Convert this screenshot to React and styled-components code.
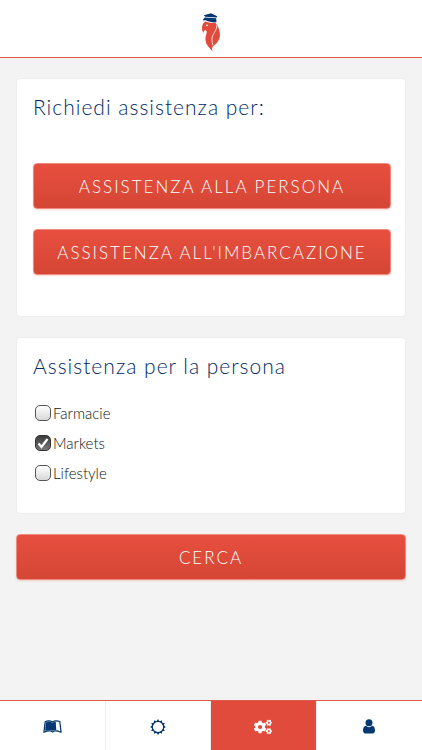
import React, { useState } from 'react';
import styled, { createGlobalStyle } from 'styled-components';
import { FaLeanpub, FaCogs } from 'react-icons/fa';

const RED = '#e14b3b';
const NAVY = '#053872';

const GlobalStyle = createGlobalStyle`
  *, *::before, *::after { box-sizing: border-box; }
  body {
    margin: 0;
    background: #f3f3f3;
    color: #111;
    font-family: Lato, "Open Sans", sans-serif;
    font-weight: 300;
  }
`;

const Page = styled.div`
  min-height: 100vh;
  display: flex;
  flex-direction: column;
`;

const Header = styled.header`
  height: 58px;
  display: flex;
  justify-content: center;
  padding-top: 13px;
  background: #fff;
  border-bottom: 1px solid #e0584b;
`;

const Main = styled.main`
  flex: 1;
  display: flex;
  flex-direction: column;
  gap: 20px;
  padding: 20px 16px;
`;

const Card = styled.section`
  padding: 15px 14px 25px 16px;
  background: #fff;
  border: 1px solid #eee;
  border-radius: 4px;
`;

const ActionCard = styled(Card)`
  padding-bottom: 41px;
`;

const Title = styled.h2`
  margin: 0;
  color: #002a66;
  font-size: 21px;
  font-weight: 300;
  line-height: 26px;
  letter-spacing: 1px;
`;

const Actions = styled.div`
  display: flex;
  flex-direction: column;
  gap: 20px;
  margin-top: 43px;
`;

const Button = styled.button`
  width: 100%;
  height: 46px;
  padding: 0 8px;
  border: 1px solid #ee8a7f;
  border-radius: 4px;
  background: linear-gradient(#e74f3f, #d54634);
  box-shadow: 0 1px 2px rgba(213, 70, 52, 0.2);
  color: #fff;
  font-family: inherit;
  font-size: 17px;
  font-weight: 300;
  letter-spacing: 2px;
  text-transform: uppercase;
  white-space: nowrap;
  cursor: pointer;
`;

const Options = styled.div`
  display: flex;
  flex-direction: column;
  margin-top: 19px;
`;

const Option = styled.label`
  display: flex;
  align-items: center;
  gap: 2px;
  height: 30px;
  padding-left: 2px;
  font-size: 15px;
`;

const Box = styled.span`
  display: grid;
  width: 16px;
  height: 16px;

  & > * { grid-area: 1 / 1; }

  svg {
    pointer-events: none;
    visibility: hidden;
  }

  input:checked + svg { visibility: visible; }
`;

const Tick = styled.input`
  appearance: none;
  width: 16px;
  height: 16px;
  margin: 0;
  border: 1px solid #555;
  border-radius: 5px;
  background: linear-gradient(#fff, #d8d8d8);

  &:checked {
    border-color: #333;
    background: linear-gradient(#3c3c3c, #777);
  }
`;

const Tabs = styled.nav`
  display: grid;
  grid-template-columns: repeat(4, 1fr);
  height: 50px;
  background: #fff;
  border-top: 1px solid #de5a4c;
`;

const Tab = styled.a`
  display: flex;
  align-items: center;
  justify-content: center;
  padding-top: 2px;
  border-right: 1px solid #eee;
  background: ${(p) => (p.$active ? RED : '#fff')};
  color: ${(p) => (p.$active ? '#fff' : NAVY)};

  &:last-child { border-right: 0; }
`;

function ParrotLogo() {
  return (
    <svg width="20" height="40" viewBox="0 0 20 40" role="img" aria-label="Logo">
      <path
        fill={RED}
        d="M4.200 8.500C2 10 .9 12.500 1 15.500c.1 2 .6 3.400 1.700 4.500 0-1.700.6-2.700 1.700-3 1.400 1 1.600 2.500.9 4.300-1.500 3.700-1.100 8 1.200 11.300 1.400 2 3 3.400 5 6-.7-2.200-.5-3.900.4-5.400 3.200-1.800 6.400-5.600 7-10 .5-4.800-1.200-9.700-4.700-13.700-3 .9-6.400.4-10-1z"
      />
      <path
        fill="none"
        stroke="#fff"
        strokeWidth=".8"
        d="M15.500 12.500c1 5-4.500 8-4.500 13.500 0 2.500.3 4.500.9 6.200"
      />
      <circle cx="6" cy="12.300" r=".9" fill="#fff" />
      <path fill={NAVY} d="M2.800 2.300 10 .2l6.200 3-.5 1.200-11.500-.6z" />
      <path fill={NAVY} d="M4 4.500 15.200 5.200l.3 4c-3.500.4-7.300-.2-10.800-2L2 7.500c.2-1.300.9-2.200 2-3z" />
    </svg>
  );
}

function SunIcon() {
  const rays = Array.from({ length: 12 }, (_, i) => i * 30);
  return (
    <svg width="16" height="16" viewBox="0 0 16 16" aria-hidden="true">
      <circle cx="8" cy="8" r="5.700" fill="none" stroke="currentColor" strokeWidth="1.300" />
      {rays.map((angle) => (
        <path key={angle} d="M6.500 2.600 8 .1l1.500 2.500z" fill="currentColor" transform={`rotate(${angle} 8 8)`} />
      ))}
    </svg>
  );
}

function UserIcon() {
  return (
    <svg width="12" height="15" viewBox="0 0 12 15" aria-hidden="true">
      <circle cx="6" cy="3.700" r="3.500" fill="currentColor" />
      <path
        fill="currentColor"
        d="M2.900 6.700a4.500 4.500 0 0 0 6.200 0C11.100 6.800 12 9 12 11.600c0 1.700-.9 2.900-2.300 2.900H2.300C.9 14.500 0 13.300 0 11.600c0-2.600.9-4.800 2.900-4.900z"
      />
    </svg>
  );
}

const TABS = [
  { label: 'Guida', href: '#guida', icon: <FaLeanpub size={19} /> },
  { label: 'Meteo', href: '#meteo', icon: <SunIcon /> },
  { label: 'Assistenza', href: '#assistenza', icon: <FaCogs size={18} />, active: true },
  { label: 'Profilo', href: '#profilo', icon: <UserIcon /> },
];

export default function App() {
  const [selected, setSelected] = useState({ Farmacie: false, Markets: true, Lifestyle: false });
  const toggle = (name) => setSelected((s) => ({ ...s, [name]: !s[name] }));

  return (
    <Page>
      <GlobalStyle />
      <Header>
        <ParrotLogo />
      </Header>
      <Main>
        <ActionCard>
          <Title>Richiedi assistenza per:</Title>
          <Actions>
            <Button type="button">Assistenza alla persona</Button>
            <Button type="button">Assistenza all'imbarcazione</Button>
          </Actions>
        </ActionCard>
        <Card>
          <Title>Assistenza per la persona</Title>
          <Options>
            {Object.keys(selected).map((name) => (
              <Option key={name}>
                <Box>
                  <Tick type="checkbox" checked={selected[name]} onChange={() => toggle(name)} />
                  <svg width="16" height="16" viewBox="0 0 16 16" aria-hidden="true">
                    <path d="M3.500 8.500 6.500 12 12.500 4" fill="none" stroke="#fff" strokeWidth="2.200" />
                  </svg>
                </Box>
                {name}
              </Option>
            ))}
          </Options>
        </Card>
        <Button type="button">Cerca</Button>
      </Main>
      <Tabs>
        {TABS.map((tab) => (
          <Tab key={tab.label} href={tab.href} aria-label={tab.label} $active={tab.active}>
            {tab.icon}
          </Tab>
        ))}
      </Tabs>
    </Page>
  );
}
